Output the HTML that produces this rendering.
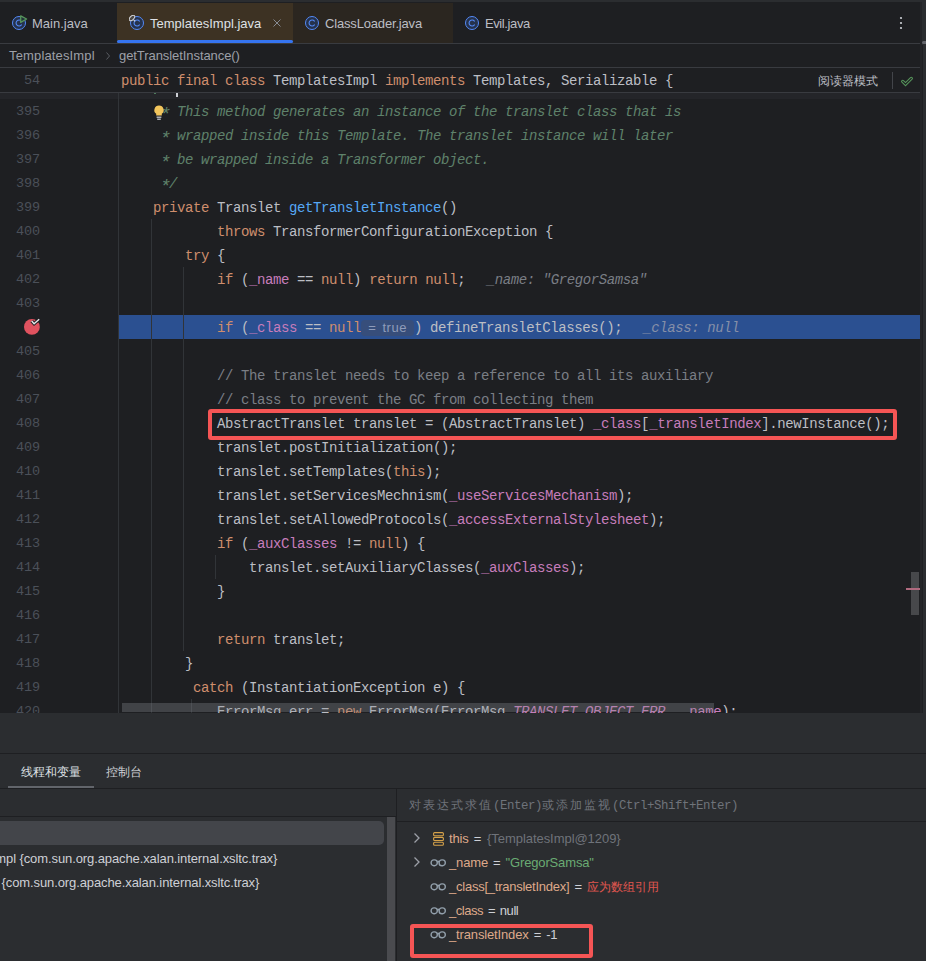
<!DOCTYPE html>
<html>
<head>
<meta charset="utf-8">
<title>TemplatesImpl.java</title>
<style>
*{box-sizing:border-box;margin:0;padding:0}
html,body{width:926px;height:961px;overflow:hidden;background:#1e1f22}
body{position:relative;font-family:"Liberation Sans",sans-serif;font-size:13px;color:#bcbec4}
.abs{position:absolute}
/* top strip */
#topstrip{left:0;top:0;width:926px;height:2px;background:#2b2d30}
/* tabs */
#tabs{left:0;top:3px;width:920px;height:40px;background:#1e1f22}
.tab{position:absolute;top:0;height:40px}
.tab .lbl{position:absolute;top:13px;font-size:13px;line-height:16px;color:#bcbec4;white-space:nowrap}
#tabline{left:0;top:43px;width:920px;height:1px;background:#393b40}
/* breadcrumb */
#crumb{left:0;top:44px;width:920px;height:23px;background:#1e1f22}
#crumb span{position:absolute;top:4px;letter-spacing:0.15px;font-size:13px;line-height:16px;color:#9da0a8;white-space:nowrap}
#crumbline{left:0;top:67px;width:920px;height:1px;background:#393b40}
/* sticky */
#sticky{left:0;top:68px;width:920px;height:24px;background:#1e1f22}
#stickyline{left:0;top:92px;width:920px;height:1px;background:#393b40}
/* editor */
#editor{left:0;top:93px;width:920px;height:620px;overflow:hidden;background:#1e1f22}
#gutline{left:118px;top:93px;width:1px;height:620px;background:#313438}
.ln{position:absolute;left:0;width:40px;text-align:right;font-family:"Liberation Mono",monospace;font-size:13.5px;line-height:26px;height:24px;color:#4b5059;letter-spacing:-0.1px}
.cl{position:absolute;left:121px;height:24px;line-height:26px;font-family:"Liberation Mono",monospace;font-size:14px;letter-spacing:-0.4px;white-space:pre;color:#bcbec4}
.k{color:#cf8e6d}.f{color:#c77dbb}.m{color:#56a8f5}.c{color:#7a7e85}.d{color:#5f826b;font-style:italic}.h{color:#7a7e85;font-style:italic}
.guide{position:absolute;width:1px;background:#313438}
.inl{display:inline-block;position:relative;top:0px;width:53px;text-align:center;font-family:"Liberation Sans",sans-serif;font-style:normal;font-size:13px;line-height:16px;height:16px;vertical-align:0px;color:#8f9cba;background:#374e7b;border-radius:4px;padding:0;margin:0;letter-spacing:0.5px;word-spacing:2px}
.h2{color:#868fa8;font-style:italic;margin-left:21px}
/* right scrollbar column */
#rcol{left:920px;top:2px;width:6px;height:711px;background:linear-gradient(90deg,#242528 0,#242528 2px,#2b2d30 2px)}
/* bottom */
#bottom{left:0;top:713px;width:926px;height:248px;background:#2b2d30}
.btab{position:absolute;font-size:12px;line-height:18px;color:#ced0d6;white-space:nowrap}
.frow{position:absolute;font-size:13px;line-height:20px;letter-spacing:-0.1px;color:#ced0d6;white-space:nowrap}
.vrow{position:absolute;left:449px;font-size:13px;line-height:20px;letter-spacing:-0.15px;word-spacing:1.6px;color:#ced0d6;white-space:nowrap}
.vn{color:#dea98a}.vg{color:#6f737a}.vs{color:#6aab73}.ve{color:#e0564f;font-size:12px;letter-spacing:0}
.cj{font-size:12px;letter-spacing:2px}
.st{display:inline-block;position:relative;top:3px;transform:scale(1.3);transform-origin:50% 50%}
</style>
</head>
<body>
<div id="topstrip" class="abs"></div>
<div id="tabs" class="abs">
<div class="tab" style="left:117px;width:176px;background:#3d3223"></div>
<div class="tab" style="left:293px;width:160px;background:#2b2620"></div>
<div class="abs" style="left:117px;top:37px;width:176px;height:3px;background:#3574f0;border-radius:2px"></div>
<svg class="abs" style="left:11px;top:12px;overflow:visible" width="16" height="16" viewBox="0 0 16 16"><circle cx="8" cy="8" r="6.5" fill="#25324d" stroke="#548af7" stroke-width="1"/><path d="M10.4 6.1 A3 3 0 1 0 10.4 9.9" fill="none" stroke="#548af7" stroke-width="1.1" stroke-linecap="round"/><path d="M9.7 0.9 L15.6 4 L9.7 7.4 Z" fill="#22323a" stroke="#57965c" stroke-width="1.3" stroke-linejoin="round"/></svg>
<div class="tab" style="left:0"><span class="lbl" style="left:32px">Main.java</span></div>
<svg class="abs" style="left:129px;top:12px" width="16" height="16" viewBox="0 0 16 16"><circle cx="8" cy="8" r="6.5" fill="#25324d" stroke="#548af7" stroke-width="1"/><path d="M10.4 6.1 A3 3 0 1 0 10.4 9.9" fill="none" stroke="#548af7" stroke-width="1.1" stroke-linecap="round"/><path d="M4.6 4.8 L6.2 6.4" stroke="#ced0d6" stroke-width="1.1"/><ellipse cx="3" cy="3" rx="3.3" ry="1.9" transform="rotate(-45 3 3)" fill="#4d4a46" stroke="#d4d5d9" stroke-width="1"/></svg>
<div class="tab" style="left:0"><span class="lbl" style="left:150px;color:#dfe1e5">TemplatesImpl.java</span></div>
<svg class="abs" style="left:272px;top:15px" width="10" height="10" viewBox="0 0 10 10"><path d="M1.5 1.5 L8.5 8.5 M8.5 1.5 L1.5 8.5" stroke="#868a91" stroke-width="1" fill="none"/></svg>
<svg class="abs" style="left:304px;top:12px" width="16" height="16" viewBox="0 0 16 16"><circle cx="8" cy="8" r="6.5" fill="#25324d" stroke="#548af7" stroke-width="1"/><path d="M10.4 6.1 A3 3 0 1 0 10.4 9.9" fill="none" stroke="#548af7" stroke-width="1.1" stroke-linecap="round"/></svg>
<div class="tab" style="left:0"><span class="lbl" style="left:325px;letter-spacing:-0.17px">ClassLoader.java</span></div>
<svg class="abs" style="left:464px;top:12px" width="16" height="16" viewBox="0 0 16 16"><circle cx="8" cy="8" r="6.5" fill="#25324d" stroke="#548af7" stroke-width="1"/><path d="M10.4 6.1 A3 3 0 1 0 10.4 9.9" fill="none" stroke="#548af7" stroke-width="1.1" stroke-linecap="round"/></svg>
<div class="tab" style="left:0"><span class="lbl" style="left:485px;letter-spacing:-0.4px">Evil.java</span></div>
<svg class="abs" style="left:898px;top:11px" width="6" height="18" viewBox="0 0 6 18"><circle cx="3" cy="4" r="1.1" fill="#ced0d6"/><circle cx="3" cy="9" r="1.1" fill="#ced0d6"/><circle cx="3" cy="14" r="1.1" fill="#ced0d6"/></svg>
</div>
<div id="tabline" class="abs"></div>
<div id="crumb" class="abs"><span style="left:9px">TemplatesImpl</span><svg class="abs" style="left:105px;top:7px" width="6" height="10" viewBox="0 0 6 10"><path d="M1.5 1.5 L4.5 5 L1.5 8.5" fill="none" stroke="#5a5d63" stroke-width="1"/></svg><span style="left:119px;letter-spacing:-0.07px">getTransletInstance()</span></div>
<div id="crumbline" class="abs"></div>
<div id="sticky" class="abs"><div class="ln" style="top:0">54</div><div class="cl" style="top:0"><span class="k">public final class</span> TemplatesImpl <span class="k">implements</span> Templates, Serializable {</div>
<span class="abs" style="left:818px;top:5px;font-size:12px;line-height:16px;color:#bcbec4;white-space:nowrap">阅读器模式</span>
<div class="abs" style="left:892px;top:4px;width:1px;height:17px;background:#43454a"></div>
<svg class="abs" style="left:899px;top:5px" width="16" height="16" viewBox="0 0 16 16"><path d="M3.7 8.4 L6.5 11.2 L12.3 5.4" fill="none" stroke="#57965c" stroke-width="3.3" stroke-linejoin="miter" stroke-linecap="round"/><path d="M3.7 8.4 L6.5 11.2 L12.3 5.4" fill="none" stroke="#1e1f22" stroke-width="1.3" stroke-linecap="round"/></svg>
</div>
<div id="stickyline" class="abs"></div>
<div id="editor" class="abs">
<div class="abs" style="left:119px;top:222px;width:801px;height:24px;background:#2b5091"></div>
<div class="guide" style="left:151px;top:126px;height:500px"></div>
<div class="guide" style="left:183px;top:174px;height:384px"></div>
<div class="guide" style="left:215px;top:462px;height:24px"></div>
<div class="guide" style="left:191px;top:606px;height:24px"></div>
<div class="ln" style="top:6px">395</div><div class="cl" style="top:6px">     <span class="d"><span class="st">*</span> This method generates an instance of the translet class that is</span></div>
<div class="ln" style="top:30px">396</div><div class="cl" style="top:30px">     <span class="d"><span class="st">*</span> wrapped inside this Template. The translet instance will later</span></div>
<div class="ln" style="top:54px">397</div><div class="cl" style="top:54px">     <span class="d"><span class="st">*</span> be wrapped inside a Transformer object.</span></div>
<div class="ln" style="top:78px">398</div><div class="cl" style="top:78px">     <span class="d"><span class="st">*</span>/</span></div>
<div class="ln" style="top:102px">399</div><div class="cl" style="top:102px">    <span class="k">private</span> Translet <span class="m">getTransletInstance</span>()</div>
<div class="ln" style="top:126px">400</div><div class="cl" style="top:126px">            <span class="k">throws</span> TransformerConfigurationException {</div>
<div class="ln" style="top:150px">401</div><div class="cl" style="top:150px">        <span class="k">try</span> {</div>
<div class="ln" style="top:174px">402</div><div class="cl" style="top:174px">            <span class="k">if</span> (<span class="f">_name</span> == <span class="k">null</span>) <span class="k">return null</span>;<span class="h" style="margin-left:21.5px">_name: &quot;GregorSamsa&quot;</span></div>
<div class="ln" style="top:198px">403</div><div class="cl" style="top:198px"></div>
<div class="ln" style="top:222px"></div><div class="cl" style="top:222px">            <span class="k">if</span> (<span class="f">_class</span> == <span class="k">null</span><span class="inl">= true</span>) defineTransletClasses();<span class="h2">_class: null</span></div>
<div class="ln" style="top:246px">405</div><div class="cl" style="top:246px"></div>
<div class="ln" style="top:270px">406</div><div class="cl" style="top:270px">            <span class="c">// The translet needs to keep a reference to all its auxiliary</span></div>
<div class="ln" style="top:294px">407</div><div class="cl" style="top:294px">            <span class="c">// class to prevent the GC from collecting them</span></div>
<div class="ln" style="top:318px">408</div><div class="cl" style="top:318px">            AbstractTranslet translet = (AbstractTranslet) <span class="f">_class</span>[<span class="f">_transletIndex</span>].newInstance();</div>
<div class="ln" style="top:342px">409</div><div class="cl" style="top:342px">            translet.postInitialization();</div>
<div class="ln" style="top:366px">410</div><div class="cl" style="top:366px">            translet.setTemplates(<span class="k">this</span>);</div>
<div class="ln" style="top:390px">411</div><div class="cl" style="top:390px">            translet.setServicesMechnism(<span class="f">_useServicesMechanism</span>);</div>
<div class="ln" style="top:414px">412</div><div class="cl" style="top:414px">            translet.setAllowedProtocols(<span class="f">_accessExternalStylesheet</span>);</div>
<div class="ln" style="top:438px">413</div><div class="cl" style="top:438px">            <span class="k">if</span> (<span class="f">_auxClasses</span> != <span class="k">null</span>) {</div>
<div class="ln" style="top:462px">414</div><div class="cl" style="top:462px">                translet.setAuxiliaryClasses(<span class="f">_auxClasses</span>);</div>
<div class="ln" style="top:486px">415</div><div class="cl" style="top:486px">            }</div>
<div class="ln" style="top:510px">416</div><div class="cl" style="top:510px"></div>
<div class="ln" style="top:534px">417</div><div class="cl" style="top:534px">            <span class="k">return</span> translet;</div>
<div class="ln" style="top:558px">418</div><div class="cl" style="top:558px">        }</div>
<div class="ln" style="top:582px">419</div><div class="cl" style="top:582px">         <span class="k">catch</span> (InstantiationException e) {</div>
<div class="ln" style="top:606px">420</div><div class="cl" style="top:606px">            ErrorMsg err = <span class="k">new</span> ErrorMsg(ErrorMsg.<span class="f" style="font-style:italic">TRANSLET_OBJECT_ERR</span>, <span class="f">_name</span>);</div>
<svg class="abs" style="left:22px;top:223px" width="22" height="22" viewBox="0 0 22 22"><circle cx="9.9" cy="10.9" r="7.9" fill="#e0525f"/><path d="M9.7 5.1 L12.1 7.7 L17.2 3.3" fill="none" stroke="#1e1f22" stroke-width="3.4"/><path d="M9.7 5.1 L12.1 7.7 L17.2 3.3" fill="none" stroke="#e6e8ec" stroke-width="1.5"/></svg>
<svg class="abs" style="left:152px;top:11px" width="14" height="18" viewBox="0 0 14 18"><path d="M7 1.5 A4.6 4.6 0 0 0 4.2 9.8 L4.2 11.5 L9.8 11.5 L9.8 9.8 A4.6 4.6 0 0 0 7 1.5 Z" fill="#f2c55c"/><rect x="4.6" y="12.6" width="4.8" height="1.2" fill="#ced0d6"/><rect x="5.2" y="14.6" width="3.6" height="1.2" fill="#ced0d6"/></svg>
<div class="abs" style="left:208px;top:316px;width:689px;height:31px;border:4px solid #f55555;border-radius:3px"></div>
<div class="abs" style="left:911px;top:479px;width:8px;height:43px;background:#47484b"></div>
<div class="abs" style="left:906px;top:495px;width:14px;height:2px;background:#b06a7f"></div>
<div class="abs" style="left:122px;top:610px;width:592px;height:9px;background:rgba(140,142,148,0.32)"></div>
</div>
<div class="abs" style="left:0;top:93px;width:920px;height:6px;background:#242529"></div>
<div class="abs" style="left:176px;top:93px;width:2px;height:4px;background:#ced0d6"></div>
<div class="abs" style="left:154px;top:93px;width:2px;height:1px;background:#4f7a5c"></div>
<div id="gutline" class="abs"></div>
<div id="rcol" class="abs"></div>
<div class="abs" style="left:922px;top:45px;width:1px;height:668px;background:#1f2023"></div>
<div class="abs" style="left:921.5px;top:41px;width:5px;height:3px;background:#65676d;border-radius:2px 0 0 2px"></div>
<div id="bottom" class="abs">
<div class="abs" style="left:0;top:40px;width:926px;height:1px;background:#1e1f22"></div>
<span class="btab" style="left:21px;top:50px;color:#dfe1e5">线程和变量</span>
<span class="btab" style="left:106px;top:50px">控制台</span>
<div class="abs" style="left:8px;top:73px;width:86px;height:2px;background:#62656b"></div>
<div class="abs" style="left:0;top:75px;width:926px;height:1px;background:#1e1f22"></div>
<div class="abs" style="left:0;top:103px;width:396px;height:1px;background:#1e1f22"></div>
<div class="abs" style="left:0;top:108px;width:384px;height:24px;background:#43454a;border-radius:0 5px 5px 0"></div>
<div class="abs" style="left:387px;top:104px;width:8px;height:144px;background:#4a4b4f"></div>
<span class="frow" style="left:-4.7px;top:136px">mpl {com.sun.org.apache.xalan.internal.xsltc.trax}</span>
<span class="frow" style="left:-2px;top:160px">&nbsp;{com.sun.org.apache.xalan.internal.xsltc.trax}</span>
<div class="abs" style="left:396px;top:76px;width:1px;height:172px;background:#1e1f22"></div>
<span class="abs" style="left:409px;top:84px;font-family:'Liberation Mono',monospace;font-size:12.4px;letter-spacing:-0.44px;line-height:18px;color:#6f737a;white-space:nowrap"><span class="cj">对表达式求值</span>(Enter)<span class="cj">或添加监视</span>(Ctrl+Shift+Enter)</span>
<div class="abs" style="left:397px;top:108px;width:529px;height:1px;background:#1e1f22"></div>
<svg class="abs" style="left:413px;top:119px" width="8" height="12" viewBox="0 0 8 12"><path d="M1.5 1.5 L6 6 L1.5 10.5" fill="none" stroke="#9da0a8" stroke-width="1.3"/></svg>
<svg class="abs" style="left:432.5px;top:118.5px" width="11" height="14" viewBox="0 0 11 14"><rect x="0.6" y="0.6" width="9.8" height="3.1" rx="1" fill="none" stroke="#d6a24a" stroke-width="1.1"/><rect x="0.6" y="5.4" width="9.8" height="3.1" rx="1" fill="none" stroke="#d6a24a" stroke-width="1.1"/><rect x="0.6" y="10.2" width="9.8" height="3.1" rx="1" fill="none" stroke="#d6a24a" stroke-width="1.1"/></svg>
<span class="vrow" style="top:116px"><span class="vn">this</span> = <span class="vg" style="letter-spacing:-0.05px;margin-left:0.8px">{TemplatesImpl@1209}</span></span>
<svg class="abs" style="left:413px;top:143px" width="8" height="12" viewBox="0 0 8 12"><path d="M1.5 1.5 L6 6 L1.5 10.5" fill="none" stroke="#9da0a8" stroke-width="1.3"/></svg>
<svg class="abs" style="left:430.0px;top:145.5px" width="17" height="8" viewBox="0 0 17 8"><rect x="1.1" y="0.9" width="6.2" height="5.8" rx="2.8" fill="none" stroke="#929fab" stroke-width="1.4"/><rect x="9.1" y="0.9" width="6.2" height="5.8" rx="2.8" fill="none" stroke="#929fab" stroke-width="1.4"/><path d="M7.2 2.6 L9.2 2.6" fill="none" stroke="#929fab" stroke-width="1.8"/></svg>
<span class="vrow" style="top:140px"><span class="vn">_name</span> = <span class="vs">"GregorSamsa"</span></span>
<svg class="abs" style="left:430.0px;top:169.5px" width="17" height="8" viewBox="0 0 17 8"><rect x="1.1" y="0.9" width="6.2" height="5.8" rx="2.8" fill="none" stroke="#929fab" stroke-width="1.4"/><rect x="9.1" y="0.9" width="6.2" height="5.8" rx="2.8" fill="none" stroke="#929fab" stroke-width="1.4"/><path d="M7.2 2.6 L9.2 2.6" fill="none" stroke="#929fab" stroke-width="1.8"/></svg>
<span class="vrow" style="top:164px"><span class="vn" style="letter-spacing:-0.24px">_class[_transletIndex]</span> = <span class="ve">应为数组引用</span></span>
<svg class="abs" style="left:430.0px;top:193.5px" width="17" height="8" viewBox="0 0 17 8"><rect x="1.1" y="0.9" width="6.2" height="5.8" rx="2.8" fill="none" stroke="#929fab" stroke-width="1.4"/><rect x="9.1" y="0.9" width="6.2" height="5.8" rx="2.8" fill="none" stroke="#929fab" stroke-width="1.4"/><path d="M7.2 2.6 L9.2 2.6" fill="none" stroke="#929fab" stroke-width="1.8"/></svg>
<span class="vrow" style="top:188px;letter-spacing:-0.45px"><span class="vn">_class</span> = null</span>
<svg class="abs" style="left:430.0px;top:217.5px" width="17" height="8" viewBox="0 0 17 8"><rect x="1.1" y="0.9" width="6.2" height="5.8" rx="2.8" fill="none" stroke="#929fab" stroke-width="1.4"/><rect x="9.1" y="0.9" width="6.2" height="5.8" rx="2.8" fill="none" stroke="#929fab" stroke-width="1.4"/><path d="M7.2 2.6 L9.2 2.6" fill="none" stroke="#929fab" stroke-width="1.8"/></svg>
<span class="vrow" style="top:212px"><span class="vn">_transletIndex</span> = -1</span>
<div class="abs" style="left:410px;top:211px;width:183px;height:34px;border:4px solid #f55555;border-radius:3px"></div>
</div>
</body>
</html>
